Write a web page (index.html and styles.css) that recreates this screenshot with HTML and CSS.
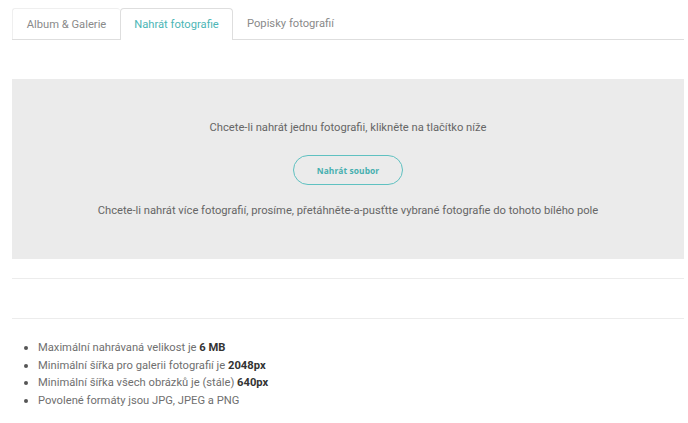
FILE: index.html
```html
<!DOCTYPE html>
<html lang="cs">
<head>
<meta charset="utf-8">
<link rel="stylesheet" href="styles.css">
</head>
<body>
<div class="page">
  <ul class="tabs">
    <li class="tab">Album &amp; Galerie</li>
    <li class="tab active">Nahrát fotografie</li>
    <li class="tab">Popisky fotografií</li>
  </ul>
  <div class="dropzone">
    <p class="hint">Chcete-li nahrát jednu fotografii, klikněte na tlačítko níže</p>
    <button class="upload">Nahrát soubor</button>
    <p class="hint">Chcete-li nahrát více fotografií, prosíme, přetáhněte-a-pusťtte vybrané fotografie do tohoto bílého pole</p>
  </div>
  <hr class="sep first">
  <hr class="sep second">
  <ul class="rules">
    <li>Maximální nahrávaná velikost je <b>6 MB</b></li>
    <li>Minimální šířka pro galerii fotografií je <b>2048px</b></li>
    <li>Minimální šířka všech obrázků je (stále) <b>640px</b></li>
    <li>Povolené formáty jsou JPG, JPEG a PNG</li>
  </ul>
</div>
</body>
</html>
```
FILE: styles.css
```css
* { box-sizing: border-box; }
html, body { margin: 0; padding: 0; background: #fff; }
body { font-family: Roboto, "Liberation Sans", sans-serif; font-size: 11.2px; color: #6f6f6f; }
.page { padding: 8px 4px 0 12px; }
.tabs {
  list-style: none; margin: 0; padding: 0;
  display: flex; align-items: flex-start; border-bottom: 1px solid #dedede;
}
.tab {
  height: 31px; display: flex; align-items: center; justify-content: center;
  white-space: nowrap; flex: none;
  color: #8a8a8a; font-size: 11.2px;
  border: 1px solid #efefef; border-bottom: none; border-radius: 3px 3px 0 0;
}
.tab:first-child { width: 108px; border-right: none; }
.tab.active {
  width: 113px; background: #fff;
  color: #4db6b6; border: 1px solid #dedede; border-bottom: none;
  height: 32px; margin-bottom: -1px; border-radius: 4px 4px 0 0;
}
.tab:last-child { border: none; padding-left: 14px; justify-content: flex-start; }
.dropzone {
  margin-top: 39px; background: #ebebeb; height: 180px;
  display: flex; flex-direction: column; align-items: center;
  padding-top: 41px;
}
.hint { margin: 0; font-size: 11.2px; color: #666; line-height: 16px; }
.upload {
  margin: 19px 0 18px; width: 110px; height: 30px;
  border: 1px solid #5fc1c1; border-radius: 15px; background: transparent;
  color: #46afaf; font-family: "Open Sans", sans-serif; font-weight: 700; font-size: 8.4px;
  letter-spacing: 0.1px; padding: 0;
}
.sep { border: none; border-top: 1px solid #ececec; margin: 0; }
.sep.first { margin-top: 19px; }
.sep.second { margin-top: 39px; }
.rules { margin: 20px 0 0; padding-left: 26px; line-height: 16.5px; color: #6f6f6f; }
.rules li::marker { color: #555; font-size: 12px; }
.rules b { color: #333; font-weight: 700; }
```
